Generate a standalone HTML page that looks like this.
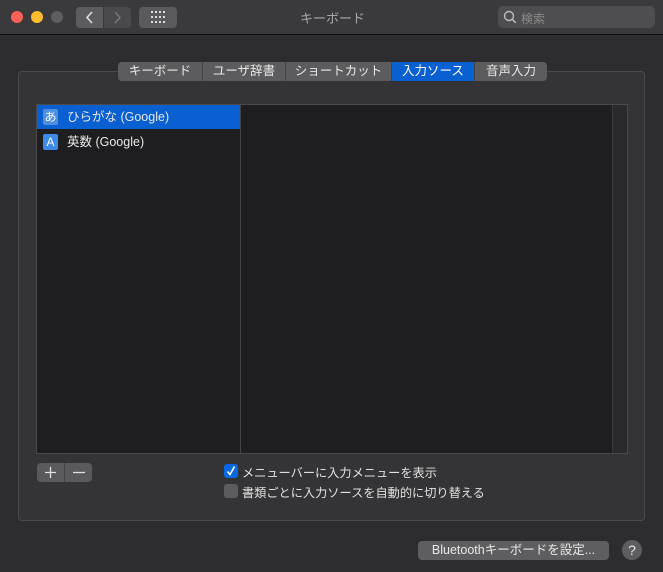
<!DOCTYPE html>
<html><head><meta charset="utf-8"><style>
*{margin:0;padding:0;box-sizing:border-box}
body{width:663px;height:572px;background:#2d2d2f;font-family:"Liberation Sans","Noto Sans CJK JP",sans-serif;position:relative;overflow:hidden;color:#dcdcdc}
.abs{position:absolute}
.tb{left:0;top:0;width:663px;height:35px;background:#3a3a3c;border-bottom:1px solid #111}
.dot{width:12px;height:12px;border-radius:50%;top:11px}
.btn{background:#5a5a5c;border-radius:4px}
.box{left:18px;top:71px;width:627px;height:450px;background:#343436;border:1px solid #4a4a4c;border-radius:4px}
.tabs{left:118px;top:62px;height:19px;display:flex;border-radius:4px;overflow:hidden;background:#5c5c5e;font-size:12.5px;color:#e8e8e8}
.tabs div{height:19px;line-height:19px;text-align:center;border-right:1px solid #444}
.list{left:36px;top:104px;width:592px;height:350px;background:#1e1e20;border:1px solid #4a4a4c}
.row{left:0;width:203px;height:24px;font-size:12.5px;line-height:24px;color:#e8e8e8}
.ic{left:6px;top:4px;width:15px;height:16px;border-radius:2px;background:#3d8ae8;color:#fff;font-size:12px;line-height:16px;text-align:center}
.cb{width:14px;height:14px;border-radius:3px}
.lbl{font-size:12.2px;color:#e0e0e0}
</style></head><body>
<div class="abs tb"></div>
<div class="abs dot" style="left:11px;background:#fe5f57"></div>
<div class="abs dot" style="left:31px;background:#febc2e"></div>
<div class="abs dot" style="left:51px;background:#5e5e60"></div>
<div class="abs btn" style="left:76px;top:7px;width:27px;height:21px;border-radius:4px 0 0 4px;background:#5c5c5e"></div>
<div class="abs btn" style="left:104px;top:7px;width:27px;height:21px;border-radius:0 4px 4px 0;background:#4a4a4c"></div>
<svg class="abs" style="left:76px;top:7px" width="55" height="21"><path d="M16 5l-5 5.5 5 5.5" stroke="#ddd" stroke-width="1.6" fill="none"/><path d="M39 5l5 5.5-5 5.5" stroke="#777" stroke-width="1.6" fill="none"/></svg>
<div class="abs btn" style="left:139px;top:7px;width:38px;height:21px"></div>
<svg class="abs" style="left:151px;top:11px" width="16" height="14"><g fill="#ddd"><rect x="0" y="0" width="2" height="2"/><rect x="4" y="0" width="2" height="2"/><rect x="8" y="0" width="2" height="2"/><rect x="12" y="0" width="2" height="2"/><rect x="0" y="5" width="2" height="2"/><rect x="4" y="5" width="2" height="2"/><rect x="8" y="5" width="2" height="2"/><rect x="12" y="5" width="2" height="2"/><rect x="0" y="10" width="2" height="2"/><rect x="4" y="10" width="2" height="2"/><rect x="8" y="10" width="2" height="2"/><rect x="12" y="10" width="2" height="2"/></g></svg>
<div class="abs" style="left:290px;top:8px;width:85px;text-align:center;font-size:13px;color:#a8a8a8">キーボード</div>
<div class="abs" style="left:498px;top:6px;width:157px;height:22px;background:#4e4e50;border-radius:5px"></div>
<svg class="abs" style="left:503px;top:10px" width="14" height="14"><circle cx="6" cy="6" r="4.5" stroke="#bbb" stroke-width="1.4" fill="none"/><path d="M9.3 9.3l3.5 3.5" stroke="#bbb" stroke-width="1.5"/></svg>
<div class="abs" style="left:521px;top:10px;font-size:12px;color:#8a8a8a">検索</div>

<div class="abs box"></div>
<div class="abs tabs">
<div style="width:85px">キーボード</div>
<div style="width:83px">ユーザ辞書</div>
<div style="width:106px">ショートカット</div>
<div style="width:83px;background:#0a5fd1;color:#fff">入力ソース</div>
<div style="width:72px;border:none">音声入力</div>
</div>

<div class="abs list">
<div class="abs" style="left:203px;top:0;width:1px;height:348px;background:#444"></div>
<div class="abs" style="left:575px;top:0;width:15px;height:348px;background:#2a2a2c;border-left:1px solid #3a3a3c"></div>
<div class="abs row" style="top:0;background:#0a5fd1"><div class="abs ic" style="background:#4f8fdf">あ</div><span style="position:absolute;left:30px">ひらがな (Google)</span></div>
<div class="abs row" style="top:25px"><div class="abs ic">A</div><span style="position:absolute;left:30px">英数 (Google)</span></div>
</div>

<div class="abs" style="left:37px;top:463px;width:55px;height:19px;background:#5a5a5c;border-radius:4px"></div>
<div class="abs" style="left:64px;top:463px;width:1px;height:19px;background:#444"></div>
<svg class="abs" style="left:37px;top:463px" width="55" height="19"><path d="M13.5 4v11M8 9.5h11" stroke="#e0e0e0" stroke-width="1.3"/><path d="M36 9.5h12" stroke="#e0e0e0" stroke-width="1.3"/></svg>

<div class="abs cb" style="left:224px;top:464px;background:#0a68e0"></div>
<svg class="abs" style="left:224px;top:464px" width="14" height="14"><path d="M3.5 7.5l2.5 3 4.5-8" stroke="#fff" stroke-width="1.6" fill="none"/></svg>
<div class="abs lbl" style="left:242px;top:463px">メニューバーに入力メニューを表示</div>
<div class="abs cb" style="left:224px;top:484px;background:#5c5c5e"></div>
<div class="abs lbl" style="left:242px;top:483px">書類ごとに入力ソースを自動的に切り替える</div>

<div class="abs" style="left:418px;top:541px;width:191px;height:19px;background:#5e5e60;border-radius:4px;font-size:12.5px;line-height:19px;text-align:center;color:#e8e8e8">Bluetoothキーボードを設定...</div>
<div class="abs" style="left:622px;top:540px;width:20px;height:20px;border-radius:50%;background:#5e5e60;font-size:14px;line-height:20px;text-align:center;color:#e8e8e8">?</div>
</body></html>
